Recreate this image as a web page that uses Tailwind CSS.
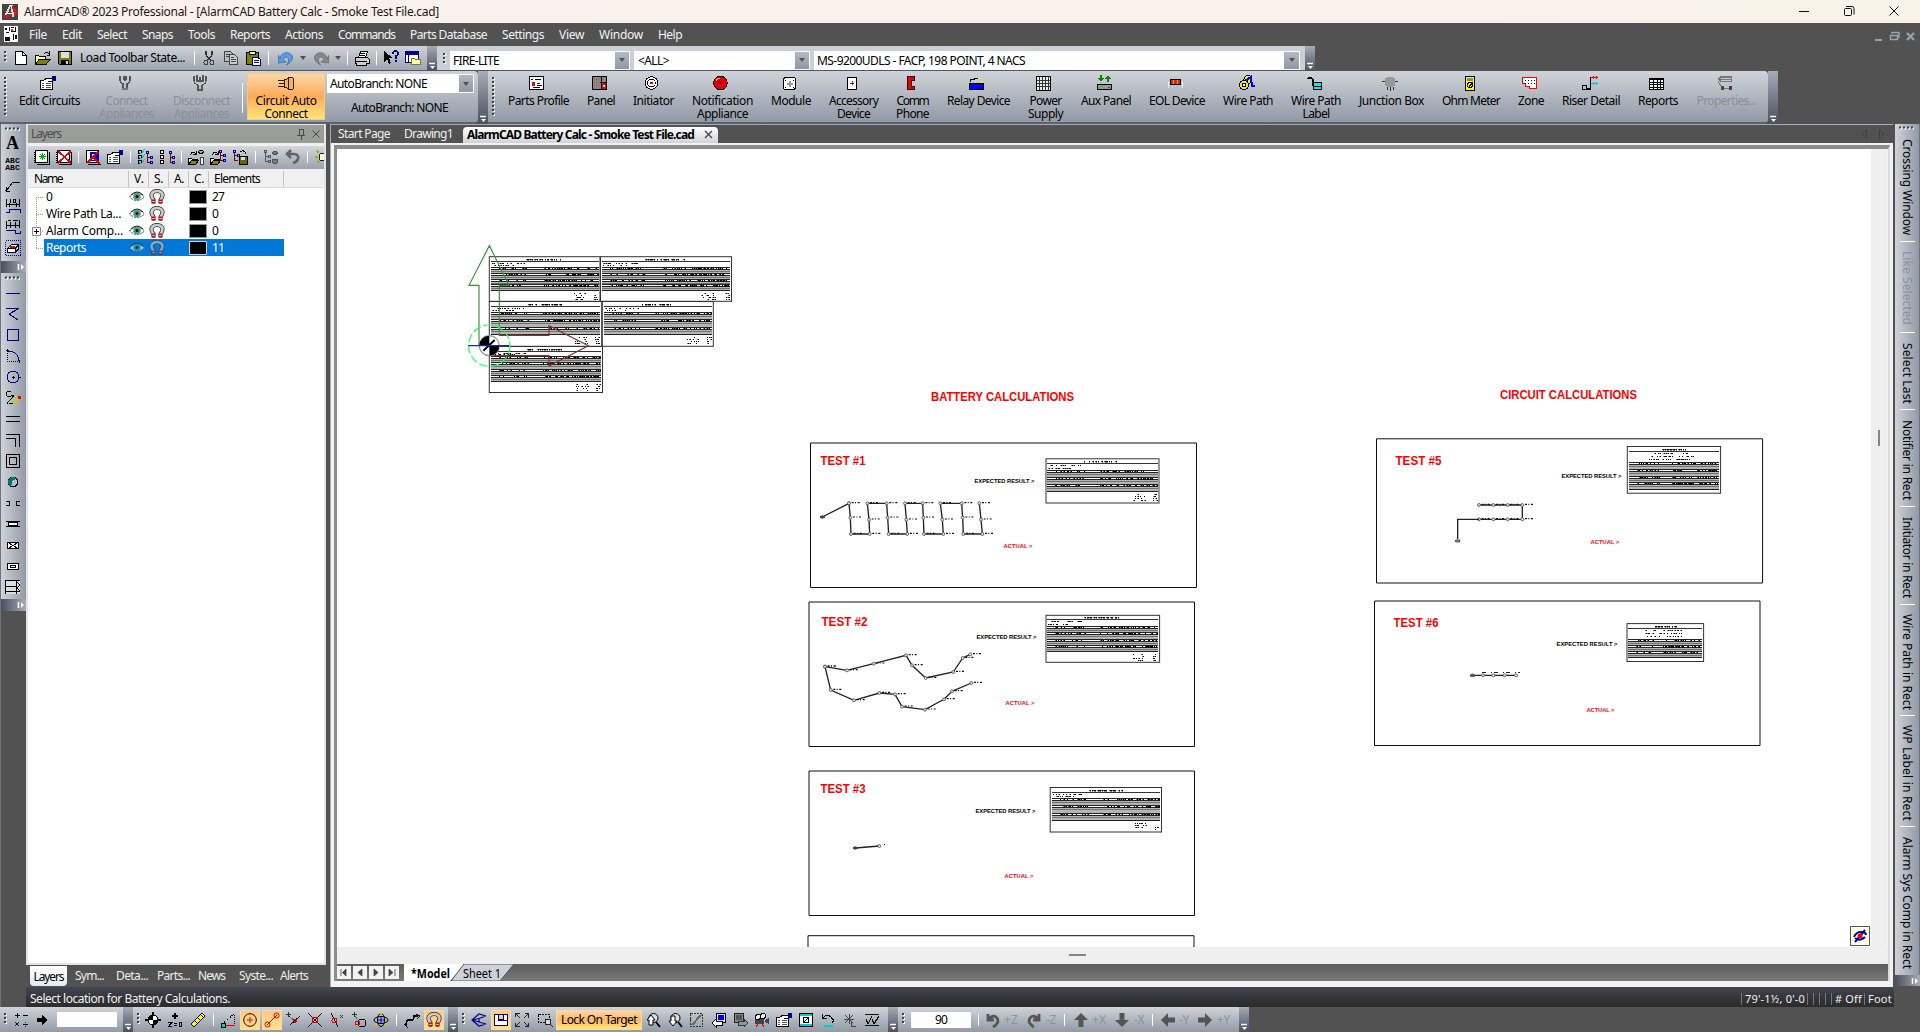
<!DOCTYPE html>
<html lang="en">
<head>
<meta charset="utf-8">
<title>AlarmCAD 2023 Professional</title>
<script src="https://cdn.jsdelivr.net/npm/@tailwindcss/browser@4"></script>
</head>
<body class="w-[1920px] h-[1032px] overflow-hidden bg-[#525252] font-['Noto_Sans','Open_Sans',sans-serif] text-[12px] leading-[16px] text-black whitespace-nowrap flex flex-col">

<!-- icon library, 16x16 grid -->
<svg class="hidden" xmlns="http://www.w3.org/2000/svg">
<defs>
<g id="logo"><path d="M0 0h16v16H0z" fill="#444"/><path d="M3 13 8 2h2l1 11" fill="none" stroke="#ddd" stroke-width="2"/><path d="M2 12q4 2 7-2M10 3q5 3 3 9" stroke="#e11" stroke-width="2.4" fill="none"/><path d="M5 9h6" stroke="#fff"/></g>
<g id="docico"><path d="M1 0h14v16H1z" fill="#fff"/><path d="M2 2h2v2H2zM6 1h1v4H6zM8 1h3v1H8zM12 1h1v4h-1zM3 6h3v1H3zM8 5h5v1H8zM2 11h5v4H2zM10 8h1v6h-1zM12 9h2v4h-2z" fill="#111"/><path d="M8 3h2v2H8z" fill="#e22"/></g>
<g id="new"><path d="M2.500 1.500h7l4 4v9h-11z" fill="#fff" stroke="#000"/><path d="M9.500 1.500v4h4" fill="none" stroke="#000"/></g>
<g id="open"><path d="M0.500 14.500v-9h3l1 1h6v3" fill="#ffffa0" stroke="#000"/><path d="M.5 14.500 4 9.500h11l-4 5z" fill="#808000" stroke="#000"/><path d="M9 3.500q2-2 5 0M14.500 1v4h-3" fill="none" stroke="#000"/></g>
<g id="save"><path d="M1.500 1.500h13v13h-12l-1-1z" fill="#808000" stroke="#000"/><path d="M4 2h8v6H4z" fill="#ddd"/><path d="M4 10h8v5H4z" fill="#000"/><path d="M9 11h2v3H9z" fill="#ddd"/></g>
<g id="cut"><path d="M5 1v4l5 6M11 1v4L6 11" fill="none" stroke="#333" stroke-width="1.300"/><circle cx="5" cy="12.500" r="2" fill="none" stroke="#444"/><circle cx="11" cy="12.500" r="2" fill="none" stroke="#444"/></g>
<g id="copy"><path d="M1.500 1.500h6l2 2v8h-8z" fill="#bbb" stroke="#444"/><path d="M6.500 4.500h5l3 3v7h-8z" fill="#ccc" stroke="#444"/><path d="M3 4.500h3M3 6.500h3M8 9.500h5M8 11.500h5M8 7.500h3" stroke="#444"/></g>
<g id="paste"><path d="M1.500 2.500h12v12h-12z" fill="#808000" stroke="#000"/><path d="M4 1h6v3H4z" fill="#ff6" stroke="#000"/><path d="M7.500 7.500h5l3 2v6h-8z" fill="#fff" stroke="#008"/><path d="M9 10.500h5M9 12.500h5" stroke="#008"/></g>
<g id="undo" shape-rendering="auto"><path d="M2 9C3 1 13 1 14.500 7c0 4-3 6-6 8 3-4 3-7 0-8-2 0-3 1-3.500 2.500L8 12 0 13V5z" fill="#5a9fe4" stroke="#1e5ea8" stroke-width=".7"/></g>
<g id="redo" shape-rendering="auto"><path d="M14 9C13 1 3 1 1.500 7c0 4 3 6 6 8-3-4-3-7 0-8 2 0 3 1 3.500 2.500L8 12l8 1V5z" fill="#85888d" stroke="#626468" stroke-width=".7"/></g>
<g id="print"><path d="M4.500 7.500l2-6h7l-2 6" fill="#fff" stroke="#000"/><path d="M1.500 7.500h12l2 2v4h-3v2h-10v-2h-1z" fill="#ccc" stroke="#000"/><path d="M2 11.500h11M6 3.500h5M6 5.500h5" stroke="#000"/></g>
<g id="help"><path d="M1 1v11l3-3 2 5 2-1-2-5h4z" fill="#000"/><path d="M10 4q0-3 2.500-3t2.500 2.500q0 2-2.500 3V8.500M12.500 10v2" stroke="#008" stroke-width="2" fill="none"/></g>
<g id="win"><path d="M.5 1.500h13v11H.5z" fill="#fff" stroke="#008"/><path d="M1 2h12v3H1z" fill="#008"/><path d="M3.500 5v8" stroke="#008"/><path d="M6.500 8.500h3l1 1h5v5h-9z" fill="#ff9" stroke="#774"/></g>
<g id="edit"><path d="M.5 5.500h12v9H.5z" fill="#fff" stroke="#000"/><path d="M2 8.500h2M6 8.500h5M2 10.500h2M6 10.500h5M2 12.500h2M6 12.500h5" stroke="#555"/><path d="M3 6l4-3h5v3H8" fill="#fff" stroke="#000"/><path d="M12 1h4v5h-4z" fill="#008"/></g>
<g id="conn"><path d="M3 1v3q0 4 3 5v5h4V9q3-1 3-5V1M6 14h4" fill="none" stroke="#555" stroke-width="1.600"/><path d="M6 1v3l2 3 2-3V1z" fill="#555"/><path d="M5 13h6v2H5z" fill="#777"/></g>
<g id="disc"><path d="M2 1v4q0 4 4 5v5h4v-5q4-1 4-5V1M5 0v6h6V0M8 2v3" fill="none" stroke="#555" stroke-width="1.200"/></g>
<g id="plug"><path d="M0 5.500h6M1 8.500h5M0 11.500h6" stroke="#220"/><path d="M6.500 4.500h2l2-2h4l1 1v10l-1 1h-4l-2-2h-2z" fill="#f9b15a" stroke="#222"/><path d="M10.500 3v11" stroke="#222"/></g>
<g id="pprof"><path d="M.5 1.500h14v13H.5z" fill="#fff" stroke="#000"/><path d="M2 4.500h2M6 4.500h6M8 8.500h3M8 10.500h5M4 12.500h7" stroke="#000"/><circle cx="4.500" cy="9" r="2" fill="#e00"/></g>
<g id="panel"><path d="M.5 1.500h14v13H.5z" fill="#888" stroke="#000" stroke-width="1.500"/><path d="M2 4.500h5M2 7.500h2M2 10.500h5M6 7.500h1" stroke="#e33" stroke-width="1.500" stroke-dasharray="1 1"/><path d="M9 2v13M8 7h7" stroke="#000"/><path d="M10 8h4v6h-4z" fill="#e00"/><path d="M11 10h2v2h-2z" fill="#fff"/></g>
<g id="init"><circle cx="7.500" cy="8" r="6.300" fill="#fff" stroke="#000"/><circle cx="7.500" cy="8" r="3.800" fill="none" stroke="#000"/><circle cx="7.500" cy="8" r="1.200" fill="#e00"/></g>
<g id="bell"><circle cx="7.500" cy="8" r="6.800" fill="#e60000" stroke="#000"/><circle cx="7.500" cy="8" r="1.200" fill="#400"/><path d="M3 6q1-3 4-3" stroke="#f99" fill="none"/></g>
<g id="mod"><rect x="1.500" y="2.500" width="12" height="12" rx="2.500" fill="#fff" stroke="#000"/><path d="M3 5h1M11 12h1M11 5h1M3 12h1" stroke="#000"/><path d="M7.500 5.500v6M4.500 8.500h6" stroke="#999" stroke-width="2"/></g>
<g id="acc"><path d="M3.500 2.500h9v12h-9z" fill="#fff" stroke="#000"/><path d="M8 6v4M6 8h4" stroke="#e00"/></g>
<g id="phone"><path d="M5 1.500h6v3.500H8v6h3v3.500H5l-1-2v-9z" fill="#e00" stroke="#200"/></g>
<g id="relay"><path d="M.5 8.500h14v6H.5z" fill="#00f" stroke="#000"/><path d="M1 7V5l9-2" stroke="#000" fill="none"/><path d="M9 3h5v1H9zM11 6h3v2h-3z" fill="#ee0"/></g>
<g id="psu"><path d="M.5 1.500h14v14H.5z" fill="#eee" stroke="#000"/><path d="M3.500 2v13M6.500 2v13M9.500 2v13M12.500 2v13M1 5.500h13M1 8.500h13M1 11.500h13" stroke="#333"/></g>
<g id="aux"><path d="M.5 9.500h14v5H.5z" fill="#999" stroke="#000"/><path d="M4 0v5M11 7V2" stroke="#080" stroke-width="2"/><path d="M1 3h6L4 7zM8 4h6L11 0z" fill="#080"/><path d="M3 11h3v1H3z" fill="#0e0"/><path d="M11 12h2v1h-2z" fill="#e00"/></g>
<g id="eol"><path d="M0.500 13V7h14v6" fill="none" stroke="#eee"/><rect x="2.500" y="4.500" width="10" height="5" rx="1" fill="#d22" stroke="#000"/><path d="M5.500 5v4M9.500 5v4" stroke="#ea0"/></g>
<g id="wire"><circle cx="9" cy="4.500" r="4" fill="#ee0" stroke="#000"/><path d="M6 6l6-4 1 9h3" stroke="#00f" fill="none" stroke-width="2"/><circle cx="5" cy="10" r="4.500" fill="#ee0" stroke="#000"/><circle cx="5" cy="10" r="1.600" fill="#fff" stroke="#000"/></g>
<g id="wlabel"><path d="M0 4l3-2 3 2v7M2 3.500h4" fill="none" stroke="#000" stroke-width="1.200"/><path d="M6.500 7.500h8v7h-8z" fill="#0ee" stroke="#000"/><path d="M6 11h9" stroke="#000"/></g>
<g id="jbox"><circle cx="8" cy="7" r="5.500" fill="#999"/><path d="M0 6.500h16M8 12v4M5 12v3M11 12v3" stroke="#333"/><path d="M3 3h10v8H3z" fill="#999"/></g>
<g id="ohm"><path d="M3.500 1.500h9v14h-9z" fill="#ff0" stroke="#000"/><path d="M5 3h6v3H5z" fill="#888"/><circle cx="8" cy="10" r="2.500" fill="none" stroke="#000"/><path d="M6 13l5-6" stroke="#000"/></g>
<g id="zone"><path d="M.5 2.500h14v11h-7v-2h-4v-3h-3z" fill="#fff" stroke="#f00" stroke-width="1.300"/><path d="M3 5.500h11M3 8.500h11" stroke="#000" stroke-dasharray="1 2"/></g>
<g id="riser"><path d="M.5 10.500h4v4h-4zM5 14h3.500V2.500H11" fill="none" stroke="#000" stroke-width="1.300"/><path d="M9 2.500h7M11 1v3M14 1v3" stroke="#f00"/><path d="M9 8.500h7M11 7v3M14 7v3" stroke="#0cc"/></g>
<g id="rept"><path d="M.5 3.500h14v11H.5z" fill="#fff" stroke="#000"/><path d="M0 4h15" stroke="#000" stroke-width="2"/><path d="M0 7.500h15M0 9.500h15M0 12.500h15M4.500 3v12M8.500 5v10M11.500 3v12" stroke="#000"/></g>
<g id="prop"><path d="M1 4l2-3h12v6H3z" fill="#777"/><path d="M4 3.500h10M4 5.500h10" stroke="#ccc"/><path d="M1 6l4 7h9" stroke="#777" fill="none"/><path d="M4 11h3v4H4zM12 11h3v4h-3z" fill="#444"/></g>
<g id="lnew"><path d="M1.500 1.500h12v12h-12z" fill="#fff" stroke="#000"/><path d="M3 15.500h12.500V3" stroke="#000" fill="none"/><path d="M1 3v11" stroke="#000" stroke-width="2" stroke-dasharray="1 1"/><path d="M8.500 4v7M5 7.500h7M6 5l5 5M11 5l-5 5" stroke="#0a0"/></g>
<g id="ldel"><path d="M1.500 1.500h12v12h-12z" fill="#fff" stroke="#000"/><path d="M3 15.500h12.500V3" stroke="#000" fill="none"/><path d="M1 3v11" stroke="#000" stroke-width="2" stroke-dasharray="1 1"/><path d="M2 2l13 12M15 2L2 14" stroke="#d00" stroke-width="1.800"/></g>
<g id="ledt"><path d="M1.500 1.500h12v12h-12z" fill="#fff" stroke="#000"/><path d="M5 3h9v9H5z" fill="#00c"/><path d="M7.500 5v6M7 5.500h4M7 8.500h3M7 10.500h4" stroke="#fff"/><path d="M3 15.500h12.500M1 3v11" stroke="#000"/><path d="M13 3 2 14M9 9l6 6" stroke="#d00" stroke-width="1.500"/></g>
<g id="chk"><path d="M1.500 1.500h3v3h-3zM1.500 6.500h3v3h-3zM1.500 11.500h3v3h-3z" fill="none" stroke="#000"/><path d="M2 3l2 2 4-5M2 8l2 2 4-5M2 13l2 2 4-5" stroke="#0cc" fill="none"/><path d="M9.500 2.500h2v2h-2zM13.500 7.500h2v2h-2zM13.500 12.500h2v2h-2z" fill="none" stroke="#00a"/><path d="M10.500 5v8.500H13M10.500 8.500H13" stroke="#800" fill="none"/></g>
<g id="sqt"><path d="M1.500 1.500h3v3h-3zM1.500 6.500h3v3h-3zM1.500 11.500h3v3h-3z" fill="#eee" stroke="#000"/><path d="M10.500 2.500h2v2h-2zM13.500 7.500h2v2h-2zM13.500 12.500h2v2h-2z" fill="none" stroke="#00a"/><path d="M11.500 5v8.500H13M11.500 8.500H13" stroke="#800" fill="none"/></g>
<g id="opn2"><path d="M.5 15.500v-6h3l1 1h5v2" fill="#ff8" stroke="#000"/><path d="M.5 15.500l3-4h7l-3 4z" fill="#880" stroke="#000"/><path d="M2 6q3-5 6-1M8 2v3H5" fill="none" stroke="#000"/><path d="M10 3q3-4 6 0-3 3-6 0z" stroke="#000" fill="#6c9"/><path d="M12 8h3v7h-3z" fill="#eee" stroke="#444"/></g>
<g id="opn3"><path d="M.5 15.500v-6h3l1 1h5v2" fill="#ff8" stroke="#000"/><path d="M.5 15.500l3-4h7l-3 4z" fill="#880" stroke="#000"/><path d="M2 6q3-5 6-1M8 2v3H5" fill="none" stroke="#000"/><path d="M9.500 1.500h2v2h-2zM13.500 5.500h2v2h-2zM13.500 10.500h2v2h-2z" fill="none" stroke="#00a"/><path d="M10.500 4v7.500H13M10.500 6.500H13" stroke="#800" fill="none"/></g>
<g id="sav3"><path d="M1.500 1.500h2v2h-2zM5.500 5.500h2v2h-2z" fill="none" stroke="#00a"/><path d="M2.500 4v7.500H6M2.500 6.500H5" stroke="#800" fill="none"/><path d="M7.500 7.500h8v8h-8z" fill="#660" stroke="#000"/><path d="M9 8h4v3H9z" fill="#ddd"/><path d="M8 3q4-3 6 2" stroke="#000" fill="none"/></g>
<g id="gtree"><path d="M1.500 1.500h2v2h-2zM5.500 6.500h2v2h-2zM5.500 11.500h2v2h-2zM2.500 4v8.500H5M2.500 7.500H5" stroke="#555" fill="none"/><path d="M9 4q3-4 6 0-3 3-6 0zM9 10h6l-1 4h-4z" fill="#777" stroke="#555"/></g>
<g id="gundo" shape-rendering="auto"><path d="M3 5h6q5 0 4 5-1 3-5 4M6 1L2 5l4 4" fill="none" stroke="#606468" stroke-width="2.500"/></g>
<g id="sun"><circle cx="12" cy="8" r="4" fill="#ffc" stroke="#222"/><path d="M6 2l2 2M4 8h3M6 14l2-2" stroke="#aa0" stroke-width="1.500"/></g>
<g id="eye" shape-rendering="auto"><path d="M.5 8Q8 0 15.500 8 8 15 .5 8z" fill="#fff" stroke="#444" stroke-dasharray="2 1"/><circle cx="8" cy="7.500" r="3.800" fill="#4aa38a"/><circle cx="8" cy="7.500" r="1.500" fill="#000"/><path d="M2 6q6-6 12 0" stroke="#222" fill="none"/></g>
<g id="mag" shape-rendering="auto"><path d="M4.500 14.500V11C0 5 4 2 8 2s8 3 3.500 9v3.500" fill="none" stroke="#333" stroke-width="4.200"/><path d="M4.500 14V11C0 5 4 2 8 2s8 3 3.500 9v3" fill="none" stroke="#ccc" stroke-width="2.600"/><path d="M3 10.500h3v1.500H3zM10 10.500h3v1.500h-3zM3 13h3v1.500H3zM10 13h3v1.500h-3z" fill="#e00"/></g>
<g id="lead"><path d="M1 14l7-9h7" fill="none" stroke="#000"/><path d="M0 14l4-3M1 10v4h4" stroke="#000" fill="none"/></g>
<g id="dim"><path d="M1.500 1v8M14.500 1v8M1 6.500h14M4.500 4.500v4M11.500 4.500v4" stroke="#000"/><path d="M5.500 1v4M8.500 1.500h2v3h-2z" stroke="#000" fill="none"/><path d="M1 14.500h3v-3h11v3" fill="none" stroke="#008"/></g>
<g id="dim2"><path d="M1.500 2v8M5.500 3v6M10.500 3v6M14.500 1v8M1 6.500h14M3 1.500h3M8 1.500h5" stroke="#000"/><path d="M1 11.500h9v3h5v-3" fill="none" stroke="#008"/></g>
<g id="eras"><path d="M.5.5h15v15H.5z" fill="none" stroke="#00a" stroke-dasharray="1 1"/><path d="M2.500 8.500l4-4h7l-3 4v4h-8zM10.500 12.500l3-4v-4M2.500 8.500h8" fill="#fff" stroke="#000" stroke-width="1.300"/><path d="M5 6.500h5" stroke="#e00" stroke-width="2"/></g>
<g id="line"><path d="M1 8.500h14" stroke="#008"/></g>
<g id="poly"><path d="M1 2.500h13L4 8l9 6" fill="none" stroke="#008"/></g>
<g id="rect"><path d="M2.500 2.500h11v11h-11z" fill="none" stroke="#008"/></g>
<g id="arc"><path d="M2.500 1v13M2 13.500h13" stroke="#000" stroke-dasharray="1 1"/><path d="M3 3q10 0 11 10" fill="none" stroke="#008"/><path d="M1 2.500h3M14 12v3" stroke="#000"/></g>
<g id="circ"><circle cx="8" cy="8" r="6" fill="none" stroke="#008"/><path d="M7 8.500h3M8.500 7v3M13 8.500h3" stroke="#000"/></g>
<g id="sket"><path d="M6 2Q1 0 1 4t5 2-1 4 3 3" fill="none" stroke="#000"/><path d="M9 13l5-6" stroke="#cc0" stroke-width="2.500"/><path d="M12.500 6h3v3h-2z" fill="#e00"/></g>
<g id="dbl"><path d="M1 5.500h14M1 10.500h14" stroke="#000"/></g>
<g id="crn"><path d="M1 2.500h13.500v12.500M1 6.500h9.500v8.500" fill="none" stroke="#000"/></g>
<g id="dblr"><path d="M1.500 1.500h13v13h-13zM4.500 4.500h7v7h-7z" fill="none" stroke="#000"/></g>
<g id="yin"><circle cx="8" cy="8" r="4.800" fill="#bbb" stroke="#000"/><path d="M4 12Q1 3 9 3q3 1 1 3-3 0-3 3t-3 3z" fill="#077"/></g>
<g id="brk"><path d="M1 6.500h3.500v4H1M15 6.500h-3.500v4H15" fill="none" stroke="#000"/></g>
<g id="w1"><path d="M1 5.500h14M1 10.500h14" stroke="#000"/><path d="M3.500 6.500h9v3h-9z" fill="#fff" stroke="#000"/></g>
<g id="w2"><path d="M2.500 5.500h11v6h-11z" fill="#fff" stroke="#000"/><path d="M4 6l8 5M12 6l-8 5" stroke="#000"/></g>
<g id="w3"><path d="M2.500 5.500h11v6h-11z" fill="#fff" stroke="#000"/><path d="M5.500 7.500h5v2h-5z" fill="none" stroke="#000"/></g>
<g id="w4"><path d="M.5 1.500h14v13H.5z" fill="#ddd"/><path d="M0 1.500h15M.5 1v14M0 7.500h12M0 12.500h15M11.500 2v13" stroke="#000"/><path d="M12 3l3 3-3 3 3 3" fill="none" stroke="#000"/></g>
<g id="calc"><path d="M4.500 1v5M2 3.500h5M10 3.500h5M2 10l4 4M6 10l-4 4M10 12.500h5M12.500 10v1M12.500 14v1" stroke="#000"/></g>
<g id="arr"><path d="M3 6h5V3l6 5-6 5v-3H3z" fill="#000"/></g>
<g id="tgt"><circle cx="8" cy="8" r="5" fill="#fff" stroke="#000"/><path d="M8 3v5H3a5 5 0 0 1 5-5zM8 13V8h5a5 5 0 0 1-5 5z"/><path d="M8 0v3M8 13v3M0 8h3M13 8h3" stroke="#000" stroke-width="1.500"/></g>
<g id="z0"><path d="M8 0l1.500 3L12 4 9.500 5 8 8 6.500 5 4 4l2.500-1z"/><path d="M1 10.500h4L1.500 14.500H5M7 11.500h3M7 13.500h3M12.500 10.500h2v4h-2z" stroke="#000" fill="none" stroke-width="1.200"/></g>
<g id="rul"><path d="M1 12L12 1l3 3L4 15z" fill="#ff0" stroke="#000"/><path d="M5 9l2 2M8 6l2 2M11 3l2 2" stroke="#000"/></g>
<g id="s1"><path d="M1 13L14 2v11" fill="none" stroke="#000" stroke-dasharray="1 1"/><path d="M5 13.500h10" stroke="#e00" stroke-width="1.500"/><path d="M1 11h4v4H1z" fill="#0cc" stroke="#000"/></g>
<g id="s2" shape-rendering="auto"><circle cx="8" cy="8" r="6.300" fill="none" stroke="#200"/><path d="M8 5v6M5 8h6" stroke="#e00"/></g>
<g id="s3" shape-rendering="auto"><path d="M3 13L13 3" stroke="#e00"/><circle cx="3.500" cy="12.500" r="2.500" fill="none" stroke="#e00"/><circle cx="12.500" cy="3.500" r="2.500" fill="none" stroke="#e00"/></g>
<g id="s4"><path d="M5 13L15 4M3 3l6 6" stroke="#000"/><path d="M1 2.500h5M3.500 0v5" stroke="#333"/><path d="M8 7l4 1-2 3z" fill="none" stroke="#e00"/><path d="M5 5l3 3" stroke="#0aa"/></g>
<g id="s5"><path d="M1 1l14 14M15 1L1 15" stroke="#000"/><path d="M5.500 5.500h5v5h-5z" fill="none" stroke="#e00"/></g>
<g id="s6"><path d="M2 1l7 14" stroke="#000"/><circle cx="5.500" cy="8.500" r="2.500" fill="none" stroke="#e00"/><path d="M11 3l3 3M14 3l-3 3" stroke="#333"/></g>
<g id="s7"><circle cx="11" cy="11" r="4" fill="none" stroke="#000"/><path d="M1 2.500h5M3.500 0v5" stroke="#333"/><path d="M4 4l3 4" stroke="#0aa"/><circle cx="6.500" cy="11" r="2" fill="none" stroke="#e00"/></g>
<g id="s8" shape-rendering="auto"><ellipse cx="8" cy="8" rx="7" ry="3.500" fill="none" stroke="#000"/><ellipse cx="8" cy="8" rx="3.500" ry="6.500" fill="none" stroke="#000"/><path d="M8 5v6M5 8h6" stroke="#00e"/><path d="M7 0h2v2H7zM2 11h2v2H2zM12 11h2v2h-2z" fill="#ec0"/></g>
<g id="s9"><path d="M2 14Q2 7 6 8t4-4h4" fill="none" stroke="#000" stroke-width="1.500"/><path d="M0 12l4 4M12 2l4 2-3 3" stroke="#000" fill="none"/></g>
<g id="iso" shape-rendering="auto"><path d="M15 4L8 2 1 8l7 6 7-2M15 4L8 6.500 1 8l7 2 7 2M8 6.500v3.500" fill="none" stroke="#008" stroke-width="1.200"/></g>
<g id="plan"><path d="M1.500 2.500h13v11h-13zM5.500 3v5h5V3M10.500 8.500h4" fill="#fff" stroke="#008" stroke-width="1.300"/></g>
<g id="exp"><path d="M2 2l4 4M14 2l-4 4M2 14l4-4M14 14l-4-4M1.500 5V1.500h4M10.500 1.500h4v4M1.500 11v3.500h4M10.500 14.500h4v-4" fill="none" stroke="#222"/></g>
<g id="zr"><path d="M1.500 2.500h11v8h-11z" fill="none" stroke="#000" stroke-dasharray="2 1"/><circle cx="11" cy="10" r="3" fill="#ddd" stroke="#222"/><path d="M13 12l3 3" stroke="#222"/></g>
<g id="zi" shape-rendering="auto"><circle cx="8.500" cy="6" r="4.500" fill="#ddd" stroke="#000"/><path d="M11 10l4 5" stroke="#000" stroke-width="2"/><path d="M2 8l4-5 4 5H8v5H4V8z" fill="#fff" stroke="#000"/></g>
<g id="zo" shape-rendering="auto"><circle cx="8.500" cy="6" r="4.500" fill="#ddd" stroke="#000"/><path d="M11 10l4 5" stroke="#000" stroke-width="2"/><path d="M2 9l4 5 4-5H8V4H4v5z" fill="#fff" stroke="#000"/></g>
<g id="dg"><path d="M1.500 1.500h12v13h-12z" fill="none" stroke="#333" stroke-dasharray="2 1"/><path d="M3 13l9-10" stroke="#666" stroke-width="2"/></g>
<g id="mon"><path d="M5.500 1.500h9v9h-9z" fill="#ddd" stroke="#000"/><path d="M7 3h6v5H7z" fill="#00e"/><path d="M1 11l4-4v2h6v4H5v2z" fill="#fff" stroke="#000"/></g>
<g id="mon2"><path d="M1.500 1.500h9v9h-9z" fill="#888" stroke="#222"/><path d="M3 3h6v5H3z" fill="#555"/><path d="M15 11l-4-4v2H5v4h6v2z" fill="#999" stroke="#333"/></g>
<g id="cam"><path d="M1 7h9v5H1zM10 9l5-3v6z" fill="#444"/><circle cx="4" cy="5" r="2.500" fill="#eee" stroke="#000"/><circle cx="9" cy="4" r="2.500" fill="#eee" stroke="#000"/><path d="M4 12l-2 3M8 12l2 3" stroke="#e00"/></g>
<g id="fr"><path d="M1.500 1.500h13v13h-13z" fill="#fff" stroke="#000" stroke-width="1.500"/><path d="M2 3h12M2 13h12" stroke="#0cc" stroke-width="2"/><circle cx="8" cy="8" r="3" fill="none" stroke="#000"/><path d="M6 10l4-4" stroke="#000"/></g>
<g id="rot"><path d="M3 6q4-5 8-1t1 6M2.500 2v4.500h4.500" fill="none" stroke="#000" stroke-width="1.300"/><path d="M4 14h9" stroke="#0cc" stroke-width="2"/></g>
<g id="star"><path d="M7.500 2v10M2 7.500h10M3 3l8 8M11 3l-8 8M9.500 9v5.500h4" stroke="#444" fill="none"/></g>
<g id="vv"><path d="M1 2.500h14M1 13.500h14M2 7l2 5 4-8M8 7l2 5 5-8" fill="none" stroke="#111" stroke-width="1.200"/></g>
<g id="rz" shape-rendering="auto"><path d="M3 2v6h6M4 7q4-5 8-1 3 5-4 9" fill="none" stroke="#555" stroke-width="2.800"/></g>
<g id="up" shape-rendering="auto"><path d="M8 1l7 7h-4.500v7h-5V8H1z" fill="#555"/></g>
<g id="spy" shape-rendering="auto"><path d="M2 9q2-5 7-5t5 3M3 10q5 4 10-1M13 2L3 14" fill="none" stroke="#00a" stroke-width="2"/><circle cx="8" cy="8" r="2.500" fill="#e00"/></g>
</defs>
</svg>

<!-- title bar -->
<header class="h-[23px] shrink-0 flex items-center bg-gradient-to-r from-[#faf0ec] to-[#f9f2e9] pl-[2px]">
  <i data-i="logo" class="size-4"></i>
  <span data-w="415" class="ml-[6px] text-[12px] text-[#1a1a1a] mt-px">AlarmCAD® 2023 Professional - [AlarmCAD Battery Calc - Smoke Test File.cad]</span>
  <svg class="ml-auto mr-[18px] w-[106px] h-[16px]" viewBox="0 0 106 16" fill="none" stroke="#111"><path d="M3 7.500h10"/><rect x="48.500" y="4.500" width="7" height="7" rx="1"/><path d="M50 2.500h6q2 0 2 2v6"/><path d="M93.500 2.500l9 9M102.500 2.500l-9 9"/></svg>
</header>

<!-- menu -->
<nav class="h-[23px] shrink-0 flex items-center text-[#f2f2f2] pl-[3px] pr-[4px]">
  <i data-i="docico" class="size-4 mb-px"></i>
  <div class="flex gap-[15px] ml-[10px]">
    <span data-w="18">File</span><span data-w="20">Edit</span><span data-w="30">Select</span><span data-w="31">Snaps</span><span data-w="27">Tools</span><span data-w="40">Reports</span><span data-w="38">Actions</span><span data-w="57">Commands</span><span data-w="77">Parts Database</span><span data-w="42">Settings</span><span data-w="25">View</span><span data-w="44">Window</span><span data-w="24">Help</span>
  </div>
  <svg class="ml-auto w-[42px] h-[12px] mt-1" viewBox="0 0 42 12" fill="none" stroke="#9aa3b0"><path d="M1 9h7" stroke-width="2"/><path d="M16.500 4.500h7v4h-7zM18 3v-1.500h7V7" stroke-width="1.400"/><path d="M33 2l7 7M40 2l-7 7" stroke-width="2.200"/></svg>
</nav>

<!-- standard toolbar -->
<div class="h-[25px] shrink-0 flex">
  <div class="w-[427px] flex items-center bg-gradient-to-b from-[#d0d3d8] to-[#9ea5b0] border-b border-[#4f5663] pl-[4px]">
    <i data-i="grip" class="w-[6px] h-[16px]"></i>
    <i data-i="new" class="w-[22px]"></i><i data-i="open" class="w-[22px]"></i><i data-i="save" class="w-[22px]"></i>
    <span data-w="105" class="ml-[4px]">Load Toolbar State...</span>
    <b class="w-px h-[14px] bg-white ml-[9px] mr-[3px]"></b>
    <i data-i="cut" class="w-[22px]"></i><i data-i="copy" class="w-[22px]"></i><i data-i="paste" class="w-[22px]"></i>
    <b class="w-px h-[14px] bg-white ml-[4px] mr-[6px]"></b>
    <i data-i="undo" class="w-[22px]"></i><i data-i="down" class="w-[12px]"></i>
    <i data-i="redo" class="w-[22px] ml-[1px]"></i><i data-i="down" class="w-[12px]"></i>
    <b class="w-px h-[14px] bg-white ml-[3px] mr-[3px]"></b>
    <i data-i="print" class="w-[22px]"></i>
    <b class="w-px h-[14px] bg-white ml-[3px] mr-[3px]"></b>
    <i data-i="help" class="w-[22px]"></i><i data-i="win" class="w-[22px]"></i>
  </div>
  <div class="w-[10px] bg-gradient-to-b from-[#a7acb7] to-[#4a515e] flex items-end justify-center"><i data-i="ovf" class="size-[10px]"></i></div>
  <div class="w-[868px] flex items-center bg-[#cbcfd6] border-b border-[#4f5663] pl-[6px] pt-[4px]">
    <i data-i="grip" class="w-[7px] h-[16px]"></i>
    <div class="w-[180px] h-[19px] bg-white flex items-center pl-[3px] pr-px"><span data-w="46" class="mt-[2px]">FIRE-LITE</span><i data-i="down" class="ml-auto w-[14px] h-[17px] bg-gradient-to-b from-[#b4bac4] to-[#9098a4]"></i></div>
    <div class="w-[176px] h-[19px] bg-white flex items-center pl-[4px] pr-px ml-[4px]"><span data-w="31" class="mt-[2px]">&lt;ALL&gt;</span><i data-i="down" class="ml-auto w-[14px] h-[17px] bg-gradient-to-b from-[#b4bac4] to-[#9098a4]"></i></div>
    <div class="w-[486px] h-[19px] bg-white flex items-center pl-[3px] pr-px ml-[4px]"><span data-w="208" class="mt-[2px]">MS-9200UDLS - FACP, 198 POINT, 4 NACS</span><i data-i="down" class="ml-auto w-[15px] h-[17px] bg-gradient-to-b from-[#b4bac4] to-[#9098a4]"></i></div>
  </div>
  <div class="w-[10px] bg-gradient-to-b from-[#a7acb7] to-[#4a515e] flex items-end justify-center"><i data-i="ovf" class="size-[10px]"></i></div>
</div>

<!-- device toolbar -->
<div class="h-[53px] shrink-0 flex leading-[13px] text-center">
  <div class="w-[478px] flex bg-gradient-to-b from-[#d0d3d9] to-[#929aa6] border-b-2 border-[#5a6270] rounded-r pl-[4px]">
    <i data-i="grip3" class="w-[6px] h-[42px] mt-[5px]"></i>
    <div class="w-[79px] pt-[4px]"><i data-i="edit" class="w-full pr-[3px]"></i><p class="mt-[3px]"><span data-w="61">Edit Circuits</span></p></div>
    <div class="w-[75px] pt-[4px] text-[#8a8f96]"><i data-i="conn" class="w-full pr-[3px]"></i><p class="mt-[3px]"><span data-w="42">Connect</span><br><span data-w="55">Appliances</span></p></div>
    <div class="w-[75px] pt-[4px] text-[#8a8f96]"><i data-i="disc" class="w-full pr-[3px]"></i><p class="mt-[3px]"><span data-w="57">Disconnect</span><br><span data-w="55">Appliances</span></p></div>
    <b class="w-px h-[30px] bg-white mt-[12px] ml-[3px] mr-[4px]"></b>
    <div class="w-[78px] h-[47px] mt-[2px] pt-px border border-[#f5c98a] bg-gradient-to-b from-[#fcd7a6] via-[#fdab58] to-[#fee57a]"><i data-i="plug" class="w-full"></i><p class="mt-[3px]"><span data-w="61">Circuit Auto</span><br><span data-w="43">Connect</span></p></div>
    <div class="ml-[2px] w-[147px] pt-[3px]">
      <div class="h-[19px] bg-white flex items-center pl-[3px] pr-px"><span data-w="97">AutoBranch: NONE</span><i data-i="down" class="ml-auto w-[14px] h-[17px] bg-gradient-to-b from-[#b4bac4] to-[#9098a4]"></i></div>
      <p class="mt-[8px] pr-[2px]"><span data-w="97">AutoBranch: NONE</span></p>
    </div>
  </div>
  <div class="w-[10px] bg-gradient-to-b from-[#a7acb7] to-[#4a515e] flex items-end justify-center"><i data-i="ovf" class="size-[10px]"></i></div>
  <div class="w-[1280px] flex bg-gradient-to-b from-[#d0d3d9] to-[#929aa6] border-b-2 border-[#5a6270] rounded-r pl-[4px]">
    <i data-i="grip3" class="w-[7px] h-[42px] mt-[5px]"></i>
    <div class="w-[79px] pt-[4px]"><i data-i="pprof" class="w-full pr-[3px]"></i><p class="mt-[3px]"><span data-w="61">Parts Profile</span></p></div>
    <div class="w-[46px] pt-[4px]"><i data-i="panel" class="w-full pr-[3px]"></i><p class="mt-[3px]"><span data-w="28">Panel</span></p></div>
    <div class="w-[59px] pt-[4px]"><i data-i="init" class="w-full pr-[3px]"></i><p class="mt-[3px]"><span data-w="41">Initiator</span></p></div>
    <div class="w-[79px] pt-[4px]"><i data-i="bell" class="w-full pr-[3px]"></i><p class="mt-[3px]"><span data-w="61">Notification</span><br><span data-w="51">Appliance</span></p></div>
    <div class="w-[58px] pt-[4px]"><i data-i="mod" class="w-full pr-[3px]"></i><p class="mt-[3px]"><span data-w="40">Module</span></p></div>
    <div class="w-[67px] pt-[4px]"><i data-i="acc" class="w-full pr-[3px]"></i><p class="mt-[3px]"><span data-w="49">Accessory</span><br><span data-w="33">Device</span></p></div>
    <div class="w-[51px] pt-[4px]"><i data-i="phone" class="w-full pr-[3px]"></i><p class="mt-[3px]"><span data-w="32">Comm</span><br><span data-w="33">Phone</span></p></div>
    <div class="w-[81px] pt-[4px]"><i data-i="relay" class="w-full pr-[3px]"></i><p class="mt-[3px]"><span data-w="63">Relay Device</span></p></div>
    <div class="w-[53px] pt-[4px]"><i data-i="psu" class="w-full pr-[3px]"></i><p class="mt-[3px]"><span data-w="32">Power</span><br><span data-w="35">Supply</span></p></div>
    <div class="w-[68px] pt-[4px]"><i data-i="aux" class="w-full pr-[3px]"></i><p class="mt-[3px]"><span data-w="50">Aux Panel</span></p></div>
    <div class="w-[74px] pt-[4px]"><i data-i="eol" class="w-full pr-[3px]"></i><p class="mt-[3px]"><span data-w="56">EOL Device</span></p></div>
    <div class="w-[68px] pt-[4px]"><i data-i="wire" class="w-full pr-[3px]"></i><p class="mt-[3px]"><span data-w="50">Wire Path</span></p></div>
    <div class="w-[68px] pt-[4px]"><i data-i="wlabel" class="w-full pr-[3px]"></i><p class="mt-[3px]"><span data-w="50">Wire Path</span><br><span data-w="27">Label</span></p></div>
    <div class="w-[83px] pt-[4px]"><i data-i="jbox" class="w-full pr-[3px]"></i><p class="mt-[3px]"><span data-w="65">Junction Box</span></p></div>
    <div class="w-[76px] pt-[4px]"><i data-i="ohm" class="w-full pr-[3px]"></i><p class="mt-[3px]"><span data-w="58">Ohm Meter</span></p></div>
    <div class="w-[44px] pt-[4px]"><i data-i="zone" class="w-full pr-[3px]"></i><p class="mt-[3px]"><span data-w="26">Zone</span></p></div>
    <div class="w-[76px] pt-[4px]"><i data-i="riser" class="w-full pr-[3px]"></i><p class="mt-[3px]"><span data-w="58">Riser Detail</span></p></div>
    <div class="w-[58px] pt-[4px]"><i data-i="rept" class="w-full pr-[3px]"></i><p class="mt-[3px]"><span data-w="40">Reports</span></p></div>
    <div class="w-[79px] pt-[4px] text-[#8a8f96]"><i data-i="prop" class="w-full pr-[3px]"></i><p class="mt-[3px]"><span data-w="60">Properties...</span></p></div>
  </div>
  <div class="w-[10px] bg-gradient-to-b from-[#a7acb7] to-[#4a515e] flex items-end justify-center"><i data-i="ovf" class="size-[10px]"></i></div>
</div>

<main class="h-[883px] shrink-0 flex">
  <!-- left tool strip -->
  <aside class="w-[26px] flex flex-col border-l border-[#6c7480]">
    <div class="h-[137px] pt-[3px] pr-[2px] bg-gradient-to-r from-[#d0d3d9] to-[#929aa6] flex flex-col items-center">
      <i data-i="hgrip" class="w-[16px] h-[4px]"></i>
      <div class="h-[22px] font-['Liberation_Serif',serif] font-bold text-[18px] leading-[25px]">A</div>
      <div class="h-[21px] font-['Liberation_Mono',monospace] font-bold text-[8px] leading-[7px] pt-[4px] text-center">ABC<br>ABC</div>
      <i data-i="lead" class="h-[21px]"></i><i data-i="dim" class="h-[21px]"></i><i data-i="dim2" class="h-[21px]"></i><i data-i="eras" class="h-[21px]"></i>
    </div>
    <div class="h-[12px] bg-gradient-to-r from-[#4a515e] to-[#a7acb7] flex items-center justify-end"><i data-i="ovfr" class="size-[10px]"></i></div>
    <div class="h-[326px] pt-[3px] pr-[2px] bg-gradient-to-r from-[#d0d3d9] to-[#929aa6] flex flex-col items-center">
      <i data-i="hgrip" class="w-[16px] h-[4px] mb-[2px]"></i>
      <i data-i="line" class="h-[21px]"></i><i data-i="poly" class="h-[21px]"></i><i data-i="rect" class="h-[21px]"></i><i data-i="arc" class="h-[21px]"></i><i data-i="circ" class="h-[21px]"></i><i data-i="sket" class="h-[21px]"></i><i data-i="dbl" class="h-[21px]"></i><i data-i="crn" class="h-[21px]"></i><i data-i="dblr" class="h-[21px]"></i><i data-i="yin" class="h-[21px]"></i><i data-i="brk" class="h-[21px]"></i><i data-i="w1" class="h-[21px]"></i><i data-i="w2" class="h-[21px]"></i><i data-i="w3" class="h-[21px]"></i><i data-i="w4" class="h-[21px]"></i>
    </div>
    <div class="h-[12px] bg-gradient-to-r from-[#4a515e] to-[#a7acb7] flex items-center justify-end"><i data-i="ovfr" class="size-[10px]"></i></div>
  </aside>

  <div class="grow flex flex-col">
    <div class="h-[863px] flex">
      <!-- layers panel -->
      <section class="w-[304px] flex flex-col">
        <div class="w-[300px] h-[841px] bg-white border-2 border-t border-[#e4e4e4] flex flex-col">
          <div class="h-[18px] shrink-0 bg-[#9b9d9b] flex items-center pl-[3px] pr-[3px] pb-px text-[#4c4c4c]"><span data-w="30">Layers</span>
            <svg class="ml-auto w-[24px] h-[12px]" viewBox="0 0 24 12" fill="none" stroke="#4a4a4a"><path d="M2.500 1v6M6.500 1v6M2 1.500h4M0 7.500h8M4.500 8v4"/><path d="M15.500 2.500l7 7M22.500 2.500l-7 7"/></svg></div>
          <div class="h-[3px] shrink-0 bg-[#f0f0f0]"></div>
          <div class="h-[23px] shrink-0 bg-gradient-to-b from-[#d4d7dc] to-[#9aa2ad] flex items-center pl-[3px] pb-px overflow-hidden">
            <i data-i="lnew" class="w-[22px]"></i><i data-i="ldel" class="w-[22px]"></i>
            <b class="w-px h-[12px] bg-white ml-[3px] mr-[3px] shrink-0"></b>
            <i data-i="ledt" class="w-[22px]"></i><i data-i="edit" class="w-[22px]"></i>
            <b class="w-px h-[12px] bg-white ml-[4px] mr-[3px] shrink-0"></b>
            <i data-i="chk" class="w-[22px]"></i><i data-i="sqt" class="w-[22px]"></i>
            <b class="w-px h-[12px] bg-white ml-[3px] mr-[3px] shrink-0"></b>
            <i data-i="opn2" class="w-[22px]"></i><i data-i="opn3" class="w-[22px]"></i><i data-i="sav3" class="w-[22px]"></i>
            <b class="w-px h-[12px] bg-white ml-[4px] mr-[4px] shrink-0"></b>
            <i data-i="gtree" class="w-[22px]"></i><i data-i="gundo" class="w-[22px]"></i>
            <b class="w-px h-[12px] bg-white ml-[3px] mr-0 shrink-0"></b>
            <i data-i="sun" class="w-[22px] shrink-0"></i>
          </div>
          <div class="h-[19px] shrink-0 bg-[#f0f0f0] border-b border-[#dcdcdc] flex items-center pt-px">
            <div class="w-[101px] border-r border-[#c4c4c4] pl-[6px]"><span data-w="28">Name</span></div>
            <div class="w-[20px] border-r border-[#c4c4c4] pl-[5px]"><span data-w="10">V.</span></div>
            <div class="w-[20px] border-r border-[#c4c4c4] pl-[5px]"><span data-w="9">S.</span></div>
            <div class="w-[20px] border-r border-[#c4c4c4] pl-[5px]"><span data-w="10">A.</span></div>
            <div class="w-[20px] border-r border-[#c4c4c4] pl-[5px]"><span data-w="10">C.</span></div>
            <div class="w-[75px] border-r border-[#c4c4c4] pl-[5px]"><span data-w="46">Elements</span></div>
          </div>
          <div class="relative">
            <svg class="absolute left-0 top-0 w-[18px] h-[68px]" viewBox="0 0 18 68" fill="none"><path d="M8.500 9v51M8 9.500h8M8 26.500h8M12 43.500h4M8 60.500h8" stroke="#999" stroke-dasharray="1 1"/><path d="M4.500 39.500h8v8h-8z" fill="#fff" stroke="#888"/><path d="M6 43.500h5M8.500 41v5" stroke="#000"/></svg>
            <div class="h-[17px] flex items-center pl-[18px]"><div class="w-[82px]"><span data-w="6">0</span></div><i data-i="eye" class="w-[20px] -ml-px"></i><i data-i="mag" class="w-[20px]"></i><b class="w-[18px] h-[14px] bg-black border border-[#999] ml-[22px]"></b><span data-w="12" class="ml-[5px]">27</span></div>
            <div class="h-[17px] flex items-center pl-[18px]"><div class="w-[82px]"><span data-w="75">Wire Path La...</span></div><i data-i="eye" class="w-[20px] -ml-px"></i><i data-i="mag" class="w-[20px]"></i><b class="w-[18px] h-[14px] bg-black border border-[#999] ml-[22px]"></b><span data-w="6" class="ml-[5px]">0</span></div>
            <div class="h-[17px] flex items-center pl-[18px]"><div class="w-[82px]"><span data-w="77">Alarm Comp...</span></div><i data-i="eye" class="w-[20px] -ml-px"></i><i data-i="mag" class="w-[20px]"></i><b class="w-[18px] h-[14px] bg-black border border-[#999] ml-[22px]"></b><span data-w="6" class="ml-[5px]">0</span></div>
            <div class="h-[17px] ml-[16px] w-[240px] bg-[#0078d7] text-white flex items-center pl-[2px]"><div class="w-[82px]"><span data-w="40">Reports</span></div><i data-i="eye" class="w-[20px] -ml-px opacity-60"></i><i data-i="mag" class="w-[20px] opacity-60"></i><b class="w-[18px] h-[14px] bg-black border border-[#ccc] ml-[22px]"></b><span data-w="12" class="ml-[5px]">11</span></div>
          </div>
        </div>
        <div class="h-[20px] flex items-center text-[#eee] pl-[4px] pt-[2px]">
          <div class="w-[37px] h-[20px] bg-gradient-to-b from-white to-[#e3ecee] rounded-b text-black text-center leading-[21px]"><span data-w="30">Layers</span></div>
          <span data-w="29" class="ml-[8px]">Sym...</span><span data-w="32" class="ml-[12px]">Deta...</span><span data-w="33" class="ml-[9px]">Parts...</span><span data-w="27" class="ml-[8px]">News</span><span data-w="34" class="ml-[14px]">Syste...</span><span data-w="28" class="ml-[7px]">Alerts</span>
        </div>
      </section>

      <!-- document area -->
      <section class="w-[1563px] flex flex-col border-l border-t border-[#a9adb3]">
        <div class="h-[18px] flex items-center text-[#f0f0f0] pl-[7px] pr-[8px]">
          <span data-w="52">Start Page</span><span data-w="49" class="ml-[14px]">Drawing1</span>
          <div class="ml-[10px] w-[255px] h-[17px] mt-[2px] bg-gradient-to-b from-white to-[#cdd1d6] rounded-t text-black font-bold flex items-center pl-[4px] pr-[5px] pb-px"><span data-w="227">AlarmCAD Battery Calc - Smoke Test File.cad</span>
            <svg class="ml-auto size-[9px]" viewBox="0 0 9 9"><path d="M1 1l7 7M8 1L1 8" stroke="#444" stroke-width="1.300"/></svg></div>
          <svg class="ml-auto w-[24px] h-[10px]" viewBox="0 0 24 10" fill="none" stroke="#3e3e3e"><path d="M5.500 1v8L1 5zM18.500 1v8L23 5z"/></svg>
        </div>
        <div class="h-[844px] bg-[#f2f2f2] border-[#f2f2f2] border-t-2 border-l-2 pl-px pr-[3px]">
          <div class="h-[836px] border-[#8b8d8b] border-t-[4px] border-l-[3px] border-r-2 border-r-[#dcdcdc] flex flex-col">
            <div class="h-[798px] flex">
              <svg id="cad" class="w-[1534px] h-[798px] bg-white" viewBox="337 149 1534 798" font-family="Liberation Sans, Arial, sans-serif" font-weight="bold">
                <g id="reports"></g>
                <g id="frames" fill="none" stroke="#111">
                  <path d="M810.500 443H1196.500V587.500H810.500z"/><path d="M809 602H1194.500V746.500H809z"/><path d="M809 771H1194.500V915.500H809z"/><path d="M808 948V935.700H1194V948"/><path d="M1376.500 438.800H1762.600V583H1376.500z"/><path d="M1374.500 601H1760V745.500H1374.500z"/>
                </g>
                <g fill="#f00" font-size="12">
                  <text x="931" y="401" textLength="143" lengthAdjust="spacingAndGlyphs">BATTERY CALCULATIONS</text><text x="1500" y="398.500" textLength="137" lengthAdjust="spacingAndGlyphs">CIRCUIT CALCULATIONS</text>
                  <text x="820.500" y="465" textLength="45" lengthAdjust="spacingAndGlyphs">TEST #1</text><text x="821.500" y="625.500" textLength="46" lengthAdjust="spacingAndGlyphs">TEST #2</text><text x="820.500" y="792.500" textLength="45" lengthAdjust="spacingAndGlyphs">TEST #3</text><text x="1395.500" y="465" textLength="46" lengthAdjust="spacingAndGlyphs">TEST #5</text><text x="1393.500" y="627.300" textLength="45" lengthAdjust="spacingAndGlyphs">TEST #6</text>
                </g>
                <g fill="#000" font-size="5.800">
                  <text x="974.500" y="483" textLength="60">EXPECTED RESULT &gt;</text><text x="976.500" y="639" textLength="60">EXPECTED RESULT &gt;</text><text x="975.500" y="812.500" textLength="60">EXPECTED RESULT &gt;</text><text x="1561.500" y="478" textLength="60">EXPECTED RESULT &gt;</text><text x="1556.500" y="646" textLength="61">EXPECTED RESULT &gt;</text>
                </g>
                <g fill="#f00" font-size="5.800">
                  <text x="1003.500" y="548" textLength="29">ACTUAL &gt;</text><text x="1005.500" y="704.500" textLength="29">ACTUAL &gt;</text><text x="1004.500" y="878" textLength="29">ACTUAL &gt;</text><text x="1590.500" y="543.500" textLength="29">ACTUAL &gt;</text><text x="1586.500" y="711.500" textLength="28">ACTUAL &gt;</text>
                </g>
                <g id="wires"></g>
                <!-- axis cursor -->
                <g transform="translate(460 230) scale(.33333)" fill="none" stroke-width="3.500">
                  <path d="M57 346V166H27L88 47l59 119h-29v150h70" stroke="#3f8f3f"/>
                  <path d="M118 316H267V287L385 347 267 408V377H88" stroke="#8a3030"/>
                  <circle cx="88" cy="347" r="62" stroke="#2f6" stroke-dasharray="26 8"/>
                  <circle cx="88" cy="347" r="30" fill="#fff" stroke="#999"/>
                  <path d="M88 347V317A30 30 0 0 0 58 347zM88 347V377A30 30 0 0 0 118 347z" fill="#000"/>
                  <path d="M70 362l34-32" stroke="#000" stroke-width="6"/>
                  <path d="M25 347H147" stroke="#22a"/>
                </g>
                <g><path d="M1850.500 926.500h19v19h-19z" fill="#ffffe1" stroke="#555"/><use href="#spy" x="1852" y="928"/></g>
              </svg>
              <div class="w-[16px] bg-[#efefef] pt-[281px] pl-[7px]"><div class="w-[2px] h-[16px] bg-[#858585]"></div></div>
            </div>
            <div class="h-[17px] bg-[#efefef] pt-[7px] pl-[732px]"><div class="w-[17px] h-[2px] bg-[#858585]"></div></div>
            <div class="h-[17px] bg-gradient-to-b from-[#5c5c5c] to-[#7a7a7a] flex items-center">
              <svg class="w-[178px] h-[17px]" viewBox="0 0 178 17"><path d="M0 2h14v13H0zM16 2h14v13H16zM32 2h14v13H32zM48 2h14v13H48z" fill="#f2f2f2"/><path d="M4 5v7M9 5v7L5.500 8.500zM25 5v7l-4-3.500zM37 5v7l4-3.500zM52 5v7l4-3.500zM58 5v7" fill="#444" stroke="#444" stroke-width=".8"/><path d="M67 0H128L113 17H67z" fill="#fff"/><path d="M114 17l13-17h50l-14 17z" fill="#cdd1d8" stroke="#555"/><text x="74" y="13.500" font-weight="bold" textLength="39" lengthAdjust="spacingAndGlyphs">*Model</text><text x="126" y="13.500" textLength="38" lengthAdjust="spacingAndGlyphs">Sheet 1</text></svg>
            </div>
          </div>
        </div>
      </section>
    </div>
    <!-- status line -->
    <div class="h-[20px] bg-gradient-to-b from-[#434653] via-[#35363b] to-[#2b2b2b] text-[#f0f0f0] flex items-center pl-[4px] pt-[4px]">
      <span data-w="200">Select location for Battery Calculations.</span>
      <div class="ml-auto flex items-center text-[11px] pr-[2px]"><b class="w-px h-[12px] bg-[#777] mr-[3px]"></b><span data-w="60">79'-1½, 0'-0</span><b class="w-px h-[12px] bg-[#777] ml-[2px]"></b><b class="w-px h-[12px] bg-[#777] ml-[5px]"></b><b class="w-px h-[12px] bg-[#777] ml-[5px]"></b><b class="w-px h-[12px] bg-[#777] ml-[5px]"></b><b class="w-px h-[12px] bg-[#777] ml-[5px] mr-[3px]"></b><span data-w="27"># Off</span><b class="w-px h-[12px] bg-[#777] ml-[2px] mr-[3px]"></b><span data-w="24">Foot</span></div>
    </div>
  </div>

  <!-- selection strip -->
  <aside class="w-[26px] pl-[1px] flex flex-col">
    <div class="h-[851px] bg-gradient-to-r from-[#d0d3d9] to-[#929aa6] border-r border-[#6c7480] flex flex-col items-center pt-[2px]">
      <i data-i="hgrip" class="w-[16px] h-[4px]"></i>
      <div class="h-[112px] w-[15px] border-b border-white flex items-center justify-center [writing-mode:vertical-rl] pt-[2px]"><span data-h="96">Crossing Window</span></div>
      <div class="h-[91px] w-[15px] border-b border-white flex items-center justify-center [writing-mode:vertical-rl] text-[#8a8f96] pt-[2px]"><span data-h="74">Like Selected</span></div>
      <div class="h-[77px] w-[15px] border-b border-white flex items-center justify-center [writing-mode:vertical-rl] pt-[4px]"><span data-h="61">Select Last</span></div>
      <div class="h-[97px] w-[15px] border-b border-white flex items-center justify-center [writing-mode:vertical-rl] pt-[4px]"><span data-h="80">Notifier in Rect</span></div>
      <div class="h-[98px] w-[15px] border-b border-white flex items-center justify-center [writing-mode:vertical-rl] pt-[4px]"><span data-h="81">Initiator in Rect</span></div>
      <div class="h-[111px] w-[15px] border-b border-white flex items-center justify-center [writing-mode:vertical-rl] pt-[4px]"><span data-h="96">Wire Path in Rect</span></div>
      <div class="h-[111px] w-[15px] border-b border-white flex items-center justify-center [writing-mode:vertical-rl] pt-[4px]"><span data-h="96">WP Label in Rect</span></div>
      <div class="h-[147px] w-[15px] flex items-center justify-center [writing-mode:vertical-rl] pt-[6px]"><span data-h="132">Alarm Sys Comp in Rect</span></div>
    </div>
    <div class="h-[11px] bg-gradient-to-r from-[#4a515e] to-[#a7acb7] flex items-center justify-end"><i data-i="ovfr" class="size-[10px]"></i></div>
  </aside>
</main>

<!-- bottom toolbars -->
<footer class="h-[25px] shrink-0 flex">
  <div class="w-[123px] bg-gradient-to-b from-[#d0d3d9] to-[#929aa6] flex items-center pl-[4px]">
    <i data-i="grip" class="w-[6px] h-[16px]"></i><i data-i="calc" class="w-[22px]"></i><i data-i="arr" class="w-[20px]"></i><div class="ml-[5px] w-[60px] h-[15px] bg-white"></div>
  </div>
  <div class="w-[10px] bg-gradient-to-b from-[#a7acb7] to-[#4a515e] flex items-end justify-center"><i data-i="ovf" class="size-[10px]"></i></div>
  <div class="w-[315px] bg-gradient-to-b from-[#d0d3d9] to-[#929aa6] flex items-center pl-[4px]">
    <i data-i="grip" class="w-[5px] h-[16px]"></i><i data-i="tgt" class="w-[22px]"></i><i data-i="z0" class="w-[22px]"></i><i data-i="rul" class="w-[24px]"></i>
    <b class="w-px h-[12px] bg-white ml-[3px] mr-[3px]"></b>
    <i data-i="s1" class="w-[22px]"></i><i data-i="s2" class="w-[20px] h-[20px] ml-px border border-[#fbd9a0] bg-gradient-to-b from-[#fcc987] to-[#fee08a]"></i><i data-i="s3" class="w-[20px] h-[20px] ml-[2px] border border-[#fbd9a0] bg-gradient-to-b from-[#fcc987] to-[#fee08a]"></i><i data-i="s4" class="w-[22px]"></i><i data-i="s5" class="w-[22px]"></i><i data-i="s6" class="w-[22px]"></i><i data-i="s7" class="w-[22px]"></i><i data-i="s8" class="w-[22px]"></i>
    <b class="w-px h-[12px] bg-white ml-[4px] mr-[4px]"></b>
    <i data-i="s9" class="w-[22px]"></i><i data-i="mag" class="w-[20px] h-[20px] ml-px border border-[#fbd9a0] bg-gradient-to-b from-[#fcc987] to-[#fee08a]"></i>
  </div>
  <div class="w-[10px] bg-gradient-to-b from-[#a7acb7] to-[#4a515e] flex items-end justify-center"><i data-i="ovf" class="size-[10px]"></i></div>
  <div class="w-[430px] bg-gradient-to-b from-[#d0d3d9] to-[#929aa6] flex items-center pl-[4px]">
    <i data-i="grip" class="w-[6px] h-[16px]"></i><i data-i="iso" class="w-[22px]"></i><i data-i="plan" class="w-[20px] h-[20px] ml-px border border-[#fbd9a0] bg-gradient-to-b from-[#fcc987] to-[#fee08a]"></i><i data-i="exp" class="w-[22px]"></i><i data-i="zr" class="w-[22px] ml-px"></i>
    <div class="w-[86px] h-[20px] border border-[#fbd9a0] bg-gradient-to-b from-[#fcd7a6] via-[#fdb76a] to-[#fee57a] text-center leading-[18px]"><span data-w="76">Lock On Target</span></div>
    <i data-i="zi" class="w-[22px]"></i><i data-i="zo" class="w-[22px]"></i><i data-i="dg" class="w-[22px]"></i><i data-i="mon" class="w-[22px]"></i><i data-i="mon2" class="w-[21px]"></i><i data-i="cam" class="w-[22px]"></i><i data-i="edit" class="w-[22px]"></i><i data-i="fr" class="w-[22px]"></i><i data-i="rot" class="w-[22px]"></i><i data-i="star" class="w-[22px]"></i><i data-i="vv" class="w-[22px]"></i>
  </div>
  <div class="w-[10px] bg-gradient-to-b from-[#a7acb7] to-[#4a515e] flex items-end justify-center"><i data-i="ovf" class="size-[10px]"></i></div>
  <div class="w-[341px] bg-gradient-to-b from-[#d0d3d9] to-[#929aa6] flex items-center pl-[4px] text-[#8d9299]">
    <i data-i="grip" class="w-[9px] h-[16px]"></i><div class="w-[60px] h-[16px] bg-white text-black text-center"><span data-w="12">90</span></div>
    <b class="w-px h-[12px] bg-white ml-[7px] mr-[3px]"></b>
    <i data-i="rz" class="w-[22px]"></i><span data-w="14">+Z</span><i data-i="rz" class="w-[22px] ml-[5px] -scale-x-100"></i><span data-w="10" class="ml-[1px]">-Z</span>
    <b class="w-px h-[12px] bg-white ml-[8px] mr-[5px]"></b>
    <i data-i="up" class="w-[22px]"></i><span data-w="14">+X</span><i data-i="up" class="w-[22px] ml-[5px] -scale-y-100"></i><span data-w="10" class="ml-[1px]">-X</span>
    <b class="w-px h-[12px] bg-white ml-[8px] mr-[4px]"></b>
    <i data-i="up" class="w-[22px] -rotate-90"></i><span data-w="10">-Y</span><i data-i="up" class="w-[22px] ml-[5px] rotate-90"></i><span data-w="13" class="ml-[1px]">+Y</span>
  </div>
  <div class="w-[10px] bg-gradient-to-b from-[#a7acb7] to-[#4a515e] flex items-end justify-center"><i data-i="ovf" class="size-[10px]"></i></div>
</footer>

<script>
// Toolbar furniture that is not on the 16x16 grid
const special = {
  grip: '<svg class="w-[4px] h-[14px] mr-auto shrink-0" viewBox="0 0 4 14"><path d="M1 1h2v2H1zM1 5h2v2H1zM1 9h2v2H1z" fill="#fff"/><path d="M0 0h2v2H0zM0 4h2v2H0zM0 8h2v2H0z" fill="#3c4048"/></svg>',
  grip3: '<svg class="w-[4px] h-[42px] mr-auto shrink-0" viewBox="0 0 4 42"><path d="M2 2v40" stroke="#fff" stroke-width="2" stroke-dasharray="2 2"/><path d="M1 1v40" stroke="#3c4048" stroke-width="2" stroke-dasharray="2 2"/></svg>',
  hgrip: '<svg class="w-[16px] h-[4px] shrink-0" viewBox="0 0 16 4"><path d="M1 2.500h15" stroke="#fff" stroke-width="2" stroke-dasharray="2 2"/><path d="M0 1.500h15" stroke="#3c4048" stroke-width="2" stroke-dasharray="2 2"/></svg>',
  down: '<svg class="w-[6px] h-[4px] shrink-0" viewBox="0 0 6 4"><path d="M0 0h6L3 4z" fill="#4c5058"/></svg>',
  ovf: '<svg class="size-[10px]" viewBox="0 0 10 10"><path d="M2 2.500h6" stroke="#fff" stroke-width="1.500"/><path d="M3 5h5L5.500 8z" fill="#fff"/></svg>',
  ovfr: '<svg class="size-[10px]" viewBox="0 0 10 10"><path d="M2.500 2v6" stroke="#fff" stroke-width="1.500"/><path d="M5 2v6l3-3z" fill="#fff"/></svg>'
};
document.querySelectorAll('i[data-i]').forEach(e => {
  const n = e.dataset.i;
  e.classList.add('flex', 'items-center', 'justify-center', 'shrink-0');
  e.innerHTML = special[n] || '<svg class="size-4 shrink-0" viewBox="0 0 16 16" shape-rendering="crispEdges"><use href="#' + n + '"/></svg>';
});

const labels = [...document.querySelectorAll('[data-w],[data-h]')];
labels.forEach(e => e.classList.add('shrink-0'));
function fit() {
  labels.forEach(e => { e.style.letterSpacing = ''; });
  if (getComputedStyle(document.body).fontSize !== '12px') return;
  const sizes = labels.map(e => e.getBoundingClientRect());
  labels.forEach((e, i) => {
    const d = e.dataset.w ? e.dataset.w - sizes[i].width : e.dataset.h - sizes[i].height;
    e.style.letterSpacing = (d / e.textContent.length).toFixed(3) + 'px';
  });
}
fit();
addEventListener('load', fit);
document.fonts.ready.then(fit);
new ResizeObserver(fit).observe(document.body);
[30, 100, 250, 500].forEach(t => setTimeout(fit, t));

// Report tables, drawn at overview scale
let seed = 7;
const rnd = () => (seed = (seed * 16807) % 2147483647) / 2147483647;
const dashes = (x0, x1, y, p, h = 1) => { let s = ''; for (let x = x0; x < x1; x += 1 + Math.floor(rnd() * 2)) if (rnd() < p) s += `M${x} ${y}h${1 + Math.floor(rnd() * 2)}v${h}h-1z`; return s; };
function table(x, y, w, h, s0, s1, circuit) {
  const X = Math.ceil(x) + 1, R = Math.floor(x + w) - 1;
  let o = `<rect x="${x}" y="${y}" width="${w}" height="${h}" fill="#fff" stroke="#333"/>`, d = '';
  d += dashes(x + w * .34 | 0, x + w * .65 | 0, Math.round(y) + 2, .8, 1.5);
  o += `<path d="M${X} ${Math.round(y) + 4.5}H${R}" stroke="#333"/>`;
  if (circuit) for (let k = 6; k < s0 - y - 1; k += 3) d += dashes(x + w * .24 | 0, x + w * .72 | 0, Math.round(y) + k, .5);
  else { d += dashes(X + 1, x + w * .33 | 0, Math.round(y) + 6, .55); d += dashes(X + 1, x + w * .22 | 0, s0 - 2, .6); }
  const n = Math.max(2, Math.round((s1 - s0) / 6.4)), p = (s1 - s0) / n;
  o += `<rect x="${X}" y="${s0}" width="${R - X}" height="${s1 - s0}" fill="#b4b6b4"/>`;
  for (let i = 0; i < n; i++) {
    const b = Math.round(s0 + i * p);
    o += `<path d="M${X} ${b + 1.5}H${R}" stroke="#fff"/><path d="M${X} ${b + .5}H${R}M${X} ${b + 2.5}H${R}" stroke="#222"/><path d="M${X} ${b + 4.5}H${R}" stroke="#707270"/>`;
    d += dashes(X + 8, x + w * .35 | 0, b + 1, .5) + dashes(x + w * .48 | 0, R - 1, b + 1, .6, i % 2 + 1);
  }
  o += `<path d="M${X} ${Math.round(s1) + .5}H${R}" stroke="#222"/>`;
  if (!circuit) for (let k = 3; k < y + h - s1 - 2; k += 2) d += dashes(x + w * .77 | 0, x + w * .88 | 0, Math.round(s1) + k, .45) + dashes(R - 5, R - 1, Math.round(s1) + k, .5);
  return o + `<path d="${d}" fill="#000"/>`;
}
document.getElementById('reports').innerHTML =
  table(489.3, 256.7, 110.7, 44.6, 267, 290) + table(600.5, 256.7, 131, 44.6, 267, 290) +
  table(489.3, 301.5, 112.4, 44.8, 312, 334) + table(602.3, 301.5, 111, 44.8, 312, 334) +
  table(489.3, 346.5, 113.2, 46, 356, 381) +
  table(1046, 458.8, 113, 44.2, 470, 491) + table(1046, 615.3, 113.6, 47, 626, 651) +
  table(1050.2, 787.5, 111.3, 44.5, 798, 820) +
  table(1627.3, 446.5, 93.3, 46.7, 462, 489, 1) + table(1627, 623.6, 76.6, 37.9, 639, 657, 1);

// Wiring runs: points at three times drawing scale, relative to an origin
function run(ox, oy, pts, labels = true) {
  let o = `<g transform="translate(${ox} ${oy}) scale(.33333)"><polyline points="${pts.map(p => p.join()).join(' ')}" fill="none" stroke="#222" stroke-width="4"/>`;
  pts.forEach(([x, y]) => { o += `<circle cx="${x}" cy="${y}" r="4.500" fill="#ddd" stroke="#555" stroke-width="2.500"/>`; if (labels) o += `<path d="M${x + 8} ${y - 2}h28" stroke="#111" stroke-width="3.500" stroke-dasharray="6 4 3 5"/>`; });
  return o + '</g>';
}
document.getElementById('wires').innerHTML =
  run(790, 370, [[177,400],[181,443],[183,492],[239,492],[237,449],[232,400],[290,400],[293,443],[296,492],[352,492],[349,449],[345,400],[398,400],[400,443],[402,492],[460,492],[457,449],[451,400],[515,400],[518,443],[520,492],[577,492],[573,449],[568,400]]) +
  run(790, 370, [[97,441],[177,400]], false) +
  run(790, 370, [[105,890],[171,901],[251,881],[348,856],[366,886],[407,924],[490,906],[518,864],[541,853]]) +
  run(790, 370, [[105,890],[122,960],[192,991],[268,969],[315,973],[336,1010],[405,1019],[462,988],[486,964],[544,939]]) +
  run(790, 750, [[196,294],[268,288]], false) +
  run(1360, 370, [[357,405],[400,405],[443,405],[487,405],[487,448],[443,448],[400,448],[357,448]]) +
  `<g transform="translate(1360 370) scale(.33333)"><path d="M357 448H293V508M286 512h14" fill="none" stroke="#222" stroke-width="4"/><path d="M287 510h12v6h-12z" fill="#999" stroke="#222" stroke-width="2"/></g>` +
  run(1360, 370, [[338,916],[369,916],[400,916],[434,916],[468,916]], false) +
  `<path d="M1482 672.500h38" stroke="#222" stroke-dasharray="4 5 1 2"/><path d="M1470 674.500h5v2h-5zM820 516h5v2h-5zM853 847h5v2h-5z" fill="#444"/><path d="M884 844h1v1h-1z"/>`;
</script>
</body>
</html>
